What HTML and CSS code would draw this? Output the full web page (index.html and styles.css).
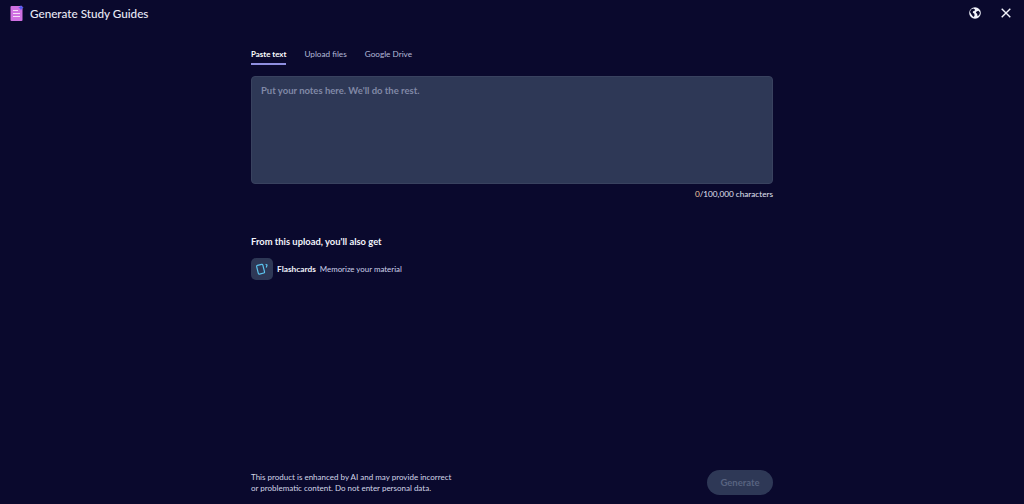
FILE: index.html
```html
<!DOCTYPE html>
<html lang="en">
<head>
    <meta charset="UTF-8">
    <meta name="viewport" content="width=device-width, initial-scale=1.0">
    <title>Generate Study Guides</title>
    <link rel="stylesheet" href="styles.css">
</head>
<body>
    <header class="topbar">
        <div class="topbar-title">
            <svg class="logo" width="14" height="16" viewBox="0 0 14 16">
                <rect x="0.5" y="1" width="12" height="15" rx="1" fill="#d070e2"/>
                <path d="M3 5.500h5M3 8.500h7M3 11.500h7" stroke="#f6dcf8" stroke-width="1.200"/>
                <path d="M11 0l.9 1.800 1.800.9-1.800.9-.9 1.800-.9-1.800-1.800-.9 1.800-.9z" fill="#4f5bf2"/>
            </svg>
            <h1>Generate Study Guides</h1>
        </div>
        <div class="topbar-actions">
            <svg width="12" height="12" viewBox="0 0 12 12">
                <circle cx="6" cy="6" r="5.8" fill="#f2f3fb"/>
                <path d="M2 2.400l2.300-.9 1.700 1-.5 1.500-1.500.3-.2 1.500 1.600 1 .1 2.300-1.200 1L2.400 7.500.9 5z" fill="#0a092d"/>
                <path d="M7.500 4.500l2-.7 1.500 2-.8 2.200-1.600 1.200-.5-2.400-1.300-1z" fill="#0a092d"/>
            </svg>
            <svg width="10" height="10" viewBox="0 0 10 10">
                <path d="M.7.700l8.600 8.600M9.300.700L.7 9.300" stroke="#f2f3fb" stroke-width="1.400"/>
            </svg>
        </div>
    </header>

    <main class="content">
        <nav class="tabs">
            <span class="tab active">Paste text</span>
            <span class="tab">Upload files</span>
            <span class="tab">Google Drive</span>
        </nav>

        <textarea class="notes" placeholder="Put your notes here. We'll do the rest."></textarea>
        <p class="count"><span class="count-num">0</span>/100,000 characters</p>

        <h2>From this upload, you'll also get</h2>
        <div class="extra">
            <span class="extra-icon">
                <svg width="14" height="14" viewBox="0 0 14 14" fill="none" stroke="#5cc4ee" stroke-width="1.200">
                    <rect x="2.400" y="2.700" width="6.400" height="9" rx="1" transform="rotate(-14 5.600 7.200)"/>
                    <path d="M10.600 2.300l1.400.7-.7 2.500"/>
                </svg>
            </span>
            <strong>Flashcards</strong>
            <span class="extra-text">Memorize your material</span>
        </div>
    </main>

    <footer class="bottom">
        <p>This product is enhanced by AI and may provide incorrect<br>or problematic content. Do not enter personal data.</p>
        <button type="button" disabled>Generate</button>
    </footer>
</body>
</html>
```

FILE: styles.css
```css
* {
    box-sizing: border-box;
}

html, body {
    height: 100%;
}

body {
    margin: 0;
    background-color: #0a092d;
    color: #fff;
    font-family: Lato, "Noto Sans", sans-serif;
    display: flex;
    flex-direction: column;
    overflow: hidden;
}

.topbar {
    display: flex;
    justify-content: space-between;
    align-items: center;
    height: 26px;
    padding: 0 13px 0 10px;
}

.topbar-title {
    display: flex;
    align-items: center;
    gap: 6px;
}

.topbar-title h1 {
    margin: 0;
    font-size: 11.700px;
    font-weight: 500;
    color: #e9eaf6;
}

.topbar-actions {
    display: flex;
    align-items: center;
    gap: 20px;
}

.content {
    width: 522px;
    margin-left: 251px;
    flex: 1;
}

.tabs {
    display: flex;
    gap: 18px;
    margin-top: 22px;
}

.tab {
    height: 17px;
    font-size: 8.200px;
    line-height: 13px;
    color: #b4bad8;
}

.tab.active {
    color: #fff;
    font-size: 7.900px;
    font-weight: 700;
    border-bottom: 2px solid #8f8fe0;
}

.notes {
    display: block;
    width: 100%;
    height: 108px;
    margin-top: 11px;
    padding: 8px 9px;
    background-color: #2e3856;
    border: 1px solid #39425f;
    border-radius: 4px;
    color: #fff;
    font-family: inherit;
    font-size: 9.500px;
    font-weight: 700;
    resize: none;
}

.notes::placeholder {
    color: #8189a6;
    opacity: 1;
}

.count {
    margin: 5px 0 0;
    font-size: 8.200px;
    line-height: 11px;
    text-align: right;
    color: #e0e3f2;
}

.count-num {
    color: #f5c9a0;
}

h2 {
    margin: 35px 0 0;
    font-size: 9.400px;
    line-height: 13px;
    font-weight: 700;
    color: #f2f3fb;
}

.extra {
    display: flex;
    align-items: center;
    margin-top: 10px;
    font-size: 8.300px;
}

.extra-icon {
    display: flex;
    justify-content: center;
    align-items: center;
    width: 22px;
    height: 22px;
    margin-right: 4px;
    background-color: #2e3856;
    border-radius: 5px;
}

.extra strong {
    color: #f2f3fb;
    margin-right: 4px;
}

.extra-text {
    font-size: 7.900px;
    color: #cdd2ea;
}

.bottom {
    display: flex;
    justify-content: space-between;
    align-items: center;
    width: 522px;
    margin: 0 0 9px 251px;
}

.bottom p {
    margin: 0;
    font-size: 8px;
    line-height: 11px;
    color: #d3d6e8;
}

.bottom button {
    width: 66px;
    height: 25px;
    border: none;
    border-radius: 13px;
    background-color: #2e3856;
    color: #586380;
    font-family: inherit;
    font-size: 9.500px;
    font-weight: 700;
}
```
